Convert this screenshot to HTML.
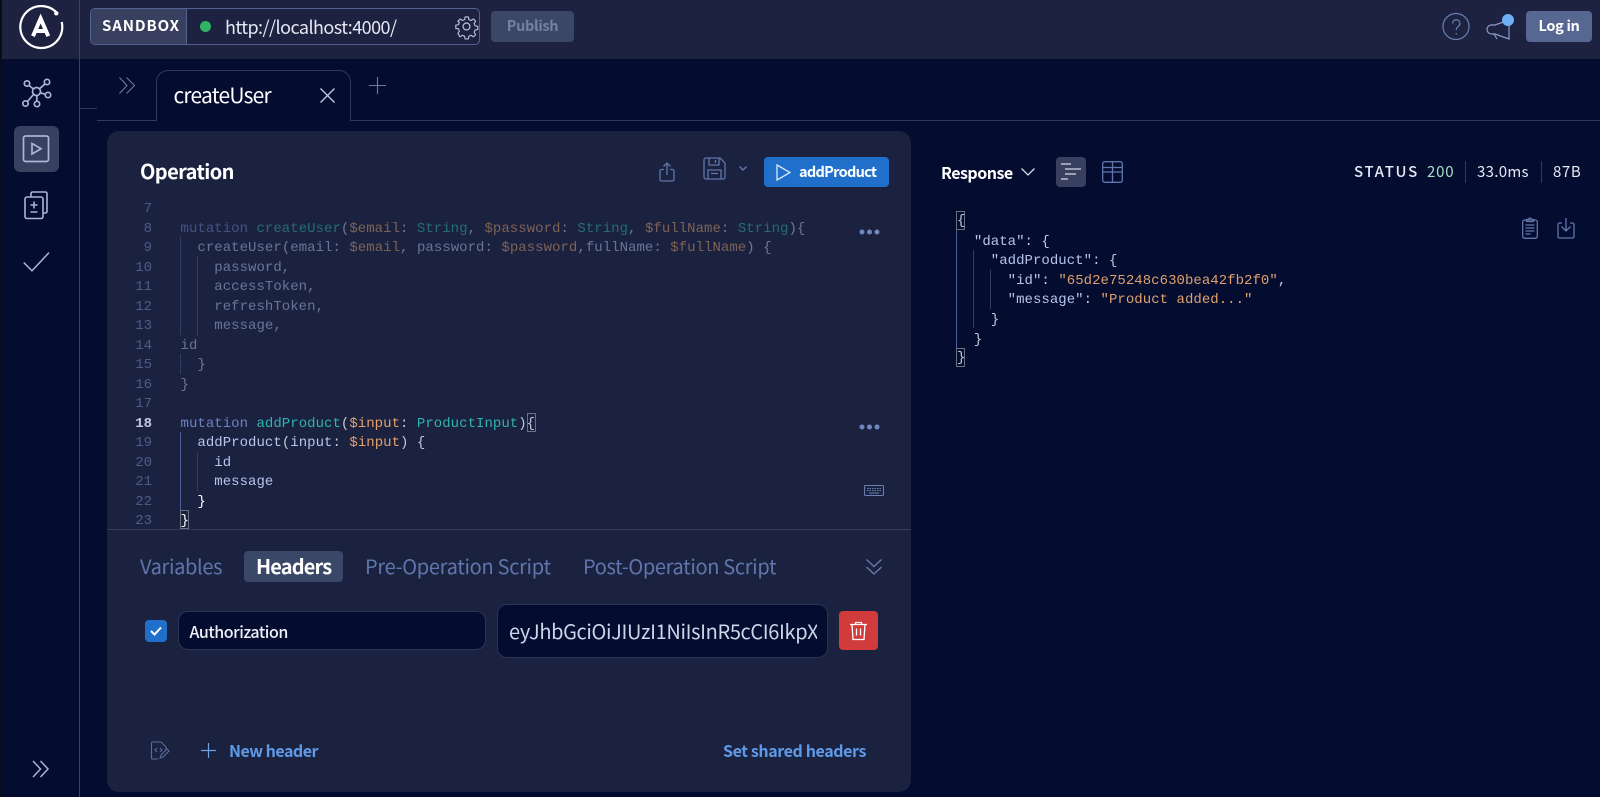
<!DOCTYPE html>
<html><head><meta charset="utf-8"><style>
*{box-sizing:border-box;margin:0;padding:0}
html,body{width:1600px;height:797px;overflow:hidden;background:#040c30}
body{position:relative;font-family:"Liberation Sans","Noto Sans CJK JP",sans-serif}
.a{position:absolute}
.t{position:absolute;font-family:"Noto Sans CJK JP","Liberation Sans",sans-serif;white-space:nowrap;line-height:30px;height:30px}
.c{position:absolute;font-family:"Liberation Mono",monospace;font-size:14px;line-height:20px;height:20px;white-space:pre;letter-spacing:.04px;margin-top:1px}
.n{position:absolute;font-family:"Liberation Mono",monospace;font-size:14px;line-height:20px;height:20px;width:40px;text-align:right;left:112px;color:#4d5c87;margin-top:1px}
.g{position:absolute;width:1px;background:#333c63}
.k{color:#6d82c4}.f{color:#2fb3ac}.v{color:#dfa06c}.p{color:#c3c9dc}.w{color:#b7c4ec}.s{color:#dfa06c}
.fd{opacity:.5}
svg{position:absolute;fill:none;overflow:visible}
</style></head><body>
<div class="a" style="left:0;top:0;width:1600px;height:59px;background:#1c2240"></div>
<div class="a" style="left:0;top:0;width:2px;height:797px;background:#0a0d18"></div>
<div class="a" style="left:79px;top:0;width:1px;height:797px;background:#3a4266"></div>
<svg style="left:17.700px;top:2.500px" width="46" height="46" viewBox="0 0 46 46" stroke="#fff"><path d="M38.500 9.500A21 21 0 1 0 43.700 19" stroke-width="2.200"/><circle cx="38.300" cy="10.300" r="2.200" fill="#fff" stroke="none"/><path d="M15 33.200L22.600 15.500L30.300 33.200M18 28H27.500" stroke-width="4"/></svg>
<div class="a" style="left:90px;top:8px;width:390px;height:37px;border:1px solid #51628f;border-radius:5px;background:#1c2240"></div>
<div class="a" style="left:91px;top:9px;width:96px;height:35px;background:#383f5f;border-right:1px solid #51628f;border-radius:4px 0 0 4px"></div>
<div class="t" style="left:102px;top:11px;font-size:15px;font-weight:700;color:#fff;letter-spacing:.9px">SANDBOX</div>
<div class="a" style="left:200px;top:21px;width:11px;height:11px;border-radius:50%;background:#2fb566"></div>
<div class="t" style="left:225px;top:12px;font-size:18px;letter-spacing:-.55px;color:#e4e8f4">http://localhost:4000/</div>
<svg style="left:455px;top:15px" width="23" height="23" viewBox="0 0 24 24" stroke="#b5c0de" stroke-width="1.300"><circle cx="12" cy="12" r="3.600"/><path d="M10.200 1.500h3.600l.6 3 2.600 1.100 2.600-1.700 2.500 2.500-1.700 2.600 1.100 2.600 3 .6v3.600l-3 .6-1.100 2.600 1.700 2.600-2.500 2.500-2.600-1.700-2.600 1.100-.6 3h-3.600l-.6-3-2.600-1.100-2.600 1.700L2 20.300l1.700-2.600-1.100-2.600-3-.6v-3.600l3-.6 1.100-2.600L2 6.400 4.500 3.900l2.600 1.700 2.500-1.100z" transform="translate(1.200 .6) scale(.92)"/></svg>
<div class="a" style="left:491px;top:11px;width:83px;height:31px;border-radius:4px;background:#3b4767"></div>
<div class="t" style="left:491px;top:11px;width:83px;text-align:center;font-size:14.500px;letter-spacing:-.3px;font-weight:700;color:#76819f">Publish</div>
<svg style="left:1442px;top:13px" width="28" height="28" viewBox="0 0 28 28" stroke="#6a80b4" stroke-width="1.200"><circle cx="14" cy="13.500" r="13"/><path d="M10.500 10.500c0-5 7.500-5 7.500 0 0 3-3.800 3-3.800 6.500M14.200 20v1.500"/></svg>
<svg style="left:1486px;top:16px" width="30" height="24" viewBox="0 0 30 24" stroke="#8b9cc6" stroke-width="1.200"><path d="M23 4L9 9H5.500a4.500 4.500 0 0 0 0 9H9l14 5zM8 18l3 5"/></svg>
<div class="a" style="left:1502px;top:14px;width:12px;height:12px;border-radius:50%;background:#6eaef5"></div>
<div class="a" style="left:1526px;top:11px;width:66px;height:31px;border-radius:4px;background:#566891"></div>
<div class="t" style="left:1526px;top:11px;width:66px;text-align:center;font-size:14.500px;letter-spacing:-.3px;font-weight:700;color:#fff">Log in</div>

<svg style="left:22px;top:78px" width="29" height="29" viewBox="0 0 29 29" stroke="#a9b5d6" stroke-width="1.700"><circle cx="14.500" cy="13.500" r="4"/><circle cx="5" cy="5.500" r="2.700"/><circle cx="25" cy="4" r="2.700"/><circle cx="26" cy="17" r="2.700"/><circle cx="15" cy="26" r="2.700"/><circle cx="3.500" cy="25.500" r="2.700"/><path d="M7 7.500l4.500 3.500M23 6l-5.500 4.800M23.400 16.300l-5-1.500M14.800 23.300v-5.800M5.500 23.500l6-7"/></svg>
<div class="a" style="left:14px;top:126px;width:45px;height:46px;border-radius:6px;background:#383f5f"></div>
<svg style="left:22px;top:135px" width="28" height="28" viewBox="0 0 28 28" stroke="#a9b5d6" stroke-width="1.700"><rect x="1.500" y="1" width="25" height="25.500" rx="2"/><path d="M10 8.500l9 5.200-9 5.300z"/></svg>
<svg style="left:24px;top:191px" width="25" height="29" viewBox="0 0 25 29" stroke="#a9b5d6" stroke-width="1.600"><path d="M7 6V2.500A1.500 1.500 0 0 1 8.500 1h13A1.500 1.500 0 0 1 23 2.500v18a1.500 1.500 0 0 1-1.500 1.500H19"/><rect x="1" y="6" width="18" height="21.500" rx="2" fill="#040c30"/><path d="M10 10.500v7M6.500 14h7M6.500 21h7"/></svg>
<svg style="left:23px;top:252px" width="27" height="20" viewBox="0 0 27 20" stroke="#a9b5d6" stroke-width="1.500"><path d="M.7 10.500L9 18.800 26 .6"/></svg>
<svg style="left:32px;top:760px" width="18" height="18" viewBox="0 0 18 18" stroke="#a9b5d6" stroke-width="1.500"><path d="M1 1l7.500 8L1 17M8.500 1L16 9l-7.500 8"/></svg>

<div class="a" style="left:80px;top:108px;width:17px;height:1px;background:#333a5c"></div>
<div class="a" style="left:97px;top:120px;width:59px;height:1px;background:#333a5c"></div>
<div class="a" style="left:351px;top:120px;width:1249px;height:1px;background:#333a5c"></div>
<svg style="left:119px;top:77px" width="17" height="17" viewBox="0 0 17 17" stroke="#6a7ba6" stroke-width="1.100"><path d="M.5 .5l7.500 8-7.500 8M7.500 .5l8 8-8 8"/></svg>
<div class="a" style="left:156px;top:70px;width:195px;height:51px;border:1px solid #333a5c;border-bottom:0;border-radius:12px 12px 0 0;background:#040c30"></div>
<div class="t" style="left:173.500px;top:80px;font-size:21px;letter-spacing:-.8px;color:#fff">createUser</div>
<svg style="left:320px;top:88px" width="15" height="15" viewBox="0 0 15 15" stroke="#c4cbe0" stroke-width="1.300"><path d="M.5 .5l14 14M14.500 .5l-14 14"/></svg>
<svg style="left:369px;top:77px" width="17" height="17" viewBox="0 0 17 17" stroke="#6a7ba6" stroke-width="1.100"><path d="M8.500 0v17M0 8.500h17"/></svg>

<div class="a" style="left:107px;top:131px;width:804px;height:661px;border-radius:12px;background:#1b2240"></div>
<div class="t" style="left:140px;top:156px;font-size:20px;font-weight:700;letter-spacing:-.6px;color:#fff">Operation</div>
<svg style="left:659px;top:162px" width="16" height="20" viewBox="0 0 16 20" stroke="#5f75a8" stroke-width="1.300"><path d="M5 7.500H2.500a1.500 1.500 0 0 0-1.500 1.500v8.500A1.500 1.500 0 0 0 2.500 19h11a1.500 1.500 0 0 0 1.500-1.500V9a1.500 1.500 0 0 0-1.500-1.500H11M8 13V1M4.500 4.500L8 1l3.500 3.500"/></svg>
<svg style="left:703px;top:157px" width="23" height="23" viewBox="0 0 23 23" stroke="#5f75a8" stroke-width="1.300"><path d="M1 3a2 2 0 0 1 2-2h14l5 5v14a2 2 0 0 1-2 2H3a2 2 0 0 1-2-2zM6 1v7h10V1M12.500 3v3M5 22v-9h13v9M8 16.500h7"/></svg>
<svg style="left:739px;top:166px" width="8" height="5" viewBox="0 0 8 5" stroke="#5f75a8" stroke-width="1.500"><path d="M.5 .5L4 4 7.500 .5"/></svg>
<div class="a" style="left:764px;top:157px;width:125px;height:30px;border-radius:4px;background:#1f6fcb"></div>
<svg style="left:776px;top:164px" width="15" height="17" viewBox="0 0 15 17" stroke="#dbe7f8" stroke-width="1.300"><path d="M1 1l13 7.500L1 16z"/></svg>
<div class="t" style="left:799px;top:157px;font-size:14.500px;font-weight:700;letter-spacing:-.7px;color:#fff">addProduct</div>

<div class="n" style="top:198px">7</div>
<div class="n" style="top:218px">8</div>
<div class="n" style="top:237px">9</div>
<div class="n" style="top:257px">10</div>
<div class="n" style="top:276px">11</div>
<div class="n" style="top:296px">12</div>
<div class="n" style="top:315px">13</div>
<div class="n" style="top:335px">14</div>
<div class="n" style="top:354px">15</div>
<div class="n" style="top:374px">16</div>
<div class="n" style="top:393px">17</div>
<div class="n" style="top:413px;color:#c3c9dc;font-weight:700">18</div>
<div class="n" style="top:432px">19</div>
<div class="n" style="top:452px">20</div>
<div class="n" style="top:471px">21</div>
<div class="n" style="top:491px">22</div>
<div class="n" style="top:510px">23</div>

<div class="g" style="left:180px;top:237px;height:98px"></div>
<div class="g" style="left:197px;top:257px;height:78px"></div>
<div class="g" style="left:180px;top:354px;height:20px"></div>
<div class="g" style="left:180px;top:432px;height:78px;background:#4d5f96"></div>
<div class="g" style="left:197px;top:452px;height:39px"></div>

<div class="fd">
<div class="c" style="left:180.500px;top:218px"><span class="k">mutation</span> <span class="f">createUser</span><span class="p">(</span><span class="v">$email</span><span class="p">:</span> <span class="f">String</span><span class="p">,</span> <span class="v">$password</span><span class="p">:</span> <span class="f">String</span><span class="p">,</span> <span class="v">$fullName</span><span class="p">:</span> <span class="f">String</span><span class="p">){</span></div>
<div class="c" style="left:180.500px;top:237px">  <span class="w">createUser</span><span class="p">(</span><span class="w">email</span><span class="p">:</span> <span class="v">$email</span><span class="p">,</span> <span class="w">password</span><span class="p">:</span> <span class="v">$password</span><span class="p">,</span><span class="w">fullName</span><span class="p">:</span> <span class="v">$fullName</span><span class="p">) {</span></div>
<div class="c w" style="left:180.500px;top:257px">    password<span class="p">,</span></div>
<div class="c w" style="left:180.500px;top:276px">    accessToken<span class="p">,</span></div>
<div class="c w" style="left:180.500px;top:296px">    refreshToken<span class="p">,</span></div>
<div class="c w" style="left:180.500px;top:315px">    message<span class="p">,</span></div>
<div class="c w" style="left:180.500px;top:335px">id</div>
<div class="c p" style="left:180.500px;top:354px">  }</div>
<div class="c p" style="left:180.500px;top:374px">}</div>
</div>
<div class="c" style="left:180.500px;top:413px"><span class="k">mutation</span> <span class="f">addProduct</span><span class="p">(</span><span class="v">$input</span><span class="p">:</span> <span class="f">ProductInput</span><span class="p">){</span></div>
<div class="a" style="left:527px;top:413px;width:9px;height:19px;border:1px solid #6b7180"></div>
<div class="c" style="left:180.500px;top:432px">  <span class="w">addProduct</span><span class="p">(</span><span class="w">input</span><span class="p">:</span> <span class="v">$input</span><span class="p">) {</span></div>
<div class="c w" style="left:180.500px;top:452px">    id</div>
<div class="c w" style="left:180.500px;top:471px">    message</div>
<div class="c p" style="left:180.500px;top:491px;color:#fff">  }</div>
<div class="a" style="left:180px;top:510px;width:9px;height:19px;border:1px solid #6b7180"></div>
<div class="c p" style="left:180.500px;top:510px;color:#fff">}</div>

<svg style="left:859px;top:229px" width="21" height="6" viewBox="0 0 21 6"><circle cx="3" cy="3" r="2.500" fill="#7087bd"/><circle cx="10.500" cy="3" r="2.500" fill="#7087bd"/><circle cx="18" cy="3" r="2.500" fill="#7087bd"/></svg>
<svg style="left:859px;top:424px" width="21" height="6" viewBox="0 0 21 6"><circle cx="3" cy="3" r="2.500" fill="#7087bd"/><circle cx="10.500" cy="3" r="2.500" fill="#7087bd"/><circle cx="18" cy="3" r="2.500" fill="#7087bd"/></svg>
<svg style="left:864px;top:485px" width="20" height="11" viewBox="0 0 20 11" stroke="#6a80b4" stroke-width="1"><rect x=".5" y=".5" width="19" height="10" rx="1"/><path d="M3 3.500h14M3 5.500h14" stroke-dasharray="1.500 1"/><path d="M5 8h10"/></svg>

<div class="a" style="left:107px;top:529px;width:804px;height:1px;background:#333a5c"></div>
<div class="t" style="left:140px;top:551px;font-size:20px;letter-spacing:-.35px;color:#6076ab">Variables</div>
<div class="a" style="left:244px;top:551px;width:99px;height:31px;border-radius:4px;background:#3a4766"></div>
<div class="t" style="left:256px;top:551px;font-size:20px;font-weight:700;letter-spacing:-.85px;color:#fff">Headers</div>
<div class="t" style="left:365px;top:551px;font-size:20px;letter-spacing:-.3px;color:#6076ab">Pre-Operation Script</div>
<div class="t" style="left:583px;top:551px;font-size:20px;letter-spacing:-.34px;color:#6076ab">Post-Operation Script</div>
<svg style="left:866px;top:559px" width="16" height="16" viewBox="0 0 16 16" stroke="#6a80b4" stroke-width="1.200"><path d="M.5 .5L8 7.500 15.500 .5M.5 8L8 15 15.500 8"/></svg>
<div class="a" style="left:145px;top:620px;width:22px;height:22px;border-radius:4px;background:#1f6fcb"></div>
<svg style="left:150px;top:626px" width="12" height="10" viewBox="0 0 12 10" stroke="#fff" stroke-width="2"><path d="M1 5l3.500 3.500L11 1.500"/></svg>
<div class="a" style="left:178px;top:611px;width:308px;height:39px;border-radius:10px;background:#040c30;border:1px solid #2c3355"></div>
<div class="t" style="left:189.500px;top:616px;font-size:16px;font-weight:500;letter-spacing:-.45px;color:#eef1f8">Authorization</div>
<div class="a" style="left:497px;top:604px;width:331px;height:54px;border-radius:10px;background:#040c30;border:1px solid #2c3355"></div>
<div class="t" style="left:509px;top:616px;width:308px;overflow:hidden;font-size:20px;letter-spacing:-.36px;color:#cdd5e8">eyJhbGciOiJIUzI1NiIsInR5cCI6IkpXVCJ9</div>
<div class="a" style="left:839px;top:611px;width:39px;height:39px;border-radius:4px;background:#d23b3c"></div>
<svg style="left:849px;top:621px" width="19" height="20" viewBox="0 0 19 20" stroke="#fff" stroke-width="1.300"><path d="M1 3.500h17M6.500 3.500V1.500h6v2M3 3.500l1 15h11l1-15M7.500 7.500v7M11.500 7.500v7"/></svg>
<svg style="left:150px;top:741px" width="20" height="20" viewBox="0 0 20 20" stroke="#5a6c9c" stroke-width="1.100"><path d="M8 18H2.500A1 1 0 0 1 1.500 17V2a1 1 0 0 1 1-1H11l5 5v3"/><path d="M7 7L5 9l2 2M10 7l2 2-2 2M10 17l1-3 6-6 2 2-6 6z"/></svg>
<svg style="left:201px;top:743px" width="15" height="15" viewBox="0 0 15 15" stroke="#6e9fdf" stroke-width="1.200"><path d="M7.500 0v15M0 7.500h15"/></svg>
<div class="t" style="left:229px;top:735px;font-size:16px;font-weight:700;letter-spacing:-.5px;color:#5f9ae6">New header</div>
<div class="t" style="left:723px;top:735px;font-size:16px;font-weight:700;letter-spacing:-.4px;color:#5f9ae6">Set shared headers</div>

<div class="t" style="left:941px;top:157px;font-size:16px;font-weight:700;letter-spacing:-.5px;color:#fff">Response</div>
<svg style="left:1021px;top:168px" width="14" height="8" viewBox="0 0 14 8" stroke="#d8dcea" stroke-width="1.300"><path d="M.5 .5L7 7 13.500 .5"/></svg>
<div class="a" style="left:1056px;top:157px;width:30px;height:30px;border-radius:4px;background:#383f5f"></div>
<svg style="left:1060px;top:163px" width="22" height="18" viewBox="0 0 22 18" stroke="#d6dbe9" stroke-width="1.300"><path d="M1 1h10M5 6h16M5 11h11M1 16h7"/></svg>
<svg style="left:1102px;top:161px" width="21" height="22" viewBox="0 0 21 22" stroke="#6076ab" stroke-width="1.300"><rect x=".7" y=".7" width="19.600" height="20.600" rx="2"/><path d="M.7 11h19.600M.7 6.500h19.600M10.500 .7v20.600"/></svg>
<div class="t" style="left:1354px;top:157px;font-size:15px;letter-spacing:1.700px;font-weight:500;color:#e6e9f3">STATUS</div>
<div class="t" style="left:1427px;top:157px;font-size:15px;letter-spacing:.8px;color:#a6e0c4">200</div>
<div class="a" style="left:1465px;top:161px;width:1px;height:22px;background:#333a5c"></div>
<div class="t" style="left:1477px;top:157px;font-size:15px;letter-spacing:.3px;color:#e6e9f3">33.0ms</div>
<div class="a" style="left:1541px;top:161px;width:1px;height:22px;background:#333a5c"></div>
<div class="t" style="left:1553px;top:157px;font-size:15px;letter-spacing:.6px;color:#e6e9f3">87B</div>
<svg style="left:1522px;top:217px" width="16" height="22" viewBox="0 0 16 22" stroke="#6076ab" stroke-width="1.300"><rect x=".7" y="3" width="14.600" height="18.300" rx="2"/><path d="M4.500 3.500V2.500h2a1.500 1.500 0 0 1 3 0h2v2h-7zM3.500 8h9M3.500 11h9M3.500 14h9M3.500 17h5"/></svg>
<svg style="left:1557px;top:217px" width="18" height="22" viewBox="0 0 18 22" stroke="#6076ab" stroke-width="1.300"><path d="M5 6H2.500A1.500 1.500 0 0 0 1 7.500v12A1.500 1.500 0 0 0 2.500 21h13a1.500 1.500 0 0 0 1.500-1.500v-12A1.500 1.500 0 0 0 15.500 6H13M9 1v13M4.500 9.500L9 14l4.500-4.500"/></svg>

<div class="g" style="left:956px;top:229px;height:121px;background:#4d5f96"></div>
<div class="g" style="left:973px;top:250px;height:78px"></div>
<div class="g" style="left:990px;top:270px;height:39px"></div>
<div class="a" style="left:956px;top:211px;width:9px;height:19px;border:1px solid #6b7180"></div>
<div class="a" style="left:956px;top:348px;width:9px;height:19px;border:1px solid #6b7180"></div>
<div class="c p" style="left:957px;top:210px">{</div>
<div class="c" style="left:957px;top:231px">  <span class="w">"data"</span><span class="p">: {</span></div>
<div class="c" style="left:957px;top:250px">    <span class="w">"addProduct"</span><span class="p">: {</span></div>
<div class="c" style="left:957px;top:270px">      <span class="w">"id"</span><span class="p">:</span> <span class="s">"65d2e75248c630bea42fb2f0"</span><span class="p">,</span></div>
<div class="c" style="left:957px;top:289px">      <span class="w">"message"</span><span class="p">:</span> <span class="s">"Product added..."</span></div>
<div class="c p" style="left:957px;top:309px">    }</div>
<div class="c p" style="left:957px;top:329px">  }</div>
<div class="c p" style="left:957px;top:347px">}</div>
</body></html>
